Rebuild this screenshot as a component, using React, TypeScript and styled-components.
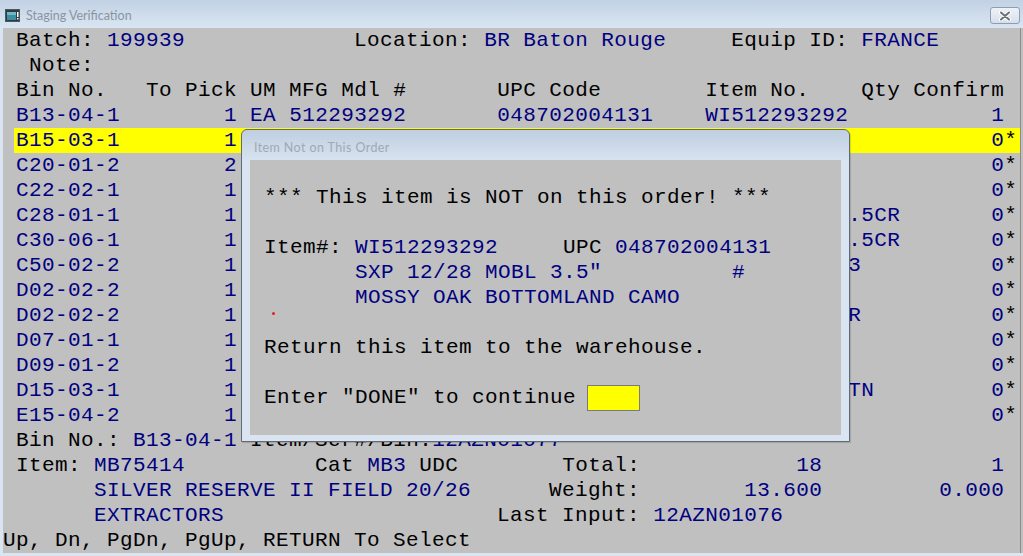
import React from "react";
import styled, { createGlobalStyle } from "styled-components";

const GlobalStyle = createGlobalStyle`
  html, body {
    margin: 0;
    padding: 0;
    background: #c0c0c0;
  }
  body {
    width: 1023px;
    height: 556px;
    overflow: hidden;
  }
`;

type Tone = "label" | "value" | "pad";
type Piece = [number, string, Tone?];

// lays pieces out on the 78-column terminal grid, padding gaps with spaces
function layout(pieces: Piece[]) {
  const out: { text: string; tone: Tone }[] = [];
  let cursor = 0;
  pieces.forEach(([col, text, tone = "value"]) => {
    if (col > cursor) out.push({ text: " ".repeat(col - cursor), tone: "pad" });
    out.push({ text, tone });
    cursor = col + text.length;
  });
  return out;
}

const Window = styled.div`
  width: 1023px;
  height: 556px;
  display: flex;
  flex-direction: column;
  background: #d9e5f1;
  overflow: hidden;
`;

const TitleBar = styled.div`
  height: 28px;
  flex: none;
  display: flex;
  align-items: flex-start;
  background: linear-gradient(to bottom, #c2d2e4 0%, #d9e5f2 100%);
`;

const AppIcon = styled.svg`
  width: 15px;
  height: 13px;
  margin: 9px 0 0 5px;
  flex: none;
`;

const Caption = styled.span<{ $faded?: boolean }>`
  font-family: Lato, "Noto Sans", sans-serif;
  font-size: 12.5px;
  color: ${({ $faded }) => ($faded ? "#a0a9b3" : "#8a949f")};
  line-height: 16px;
  margin: 8px 0 0 6px;
  white-space: nowrap;
`;

const CloseButton = styled.div`
  margin: 7px 3px 0 auto;
  width: 28px;
  height: 15px;
  border: 1px solid #8e9db0;
  border-radius: 3px;
  background: linear-gradient(to bottom, #eef2f7 0%, #d6e0eb 100%);
  display: flex;
  align-items: center;
  justify-content: center;
`;

const Body = styled.div`
  flex: 1;
  display: flex;
  padding: 0 0 3px 3px;
`;

const Screen = styled.div`
  position: relative;
  width: 1017px;
  height: 525px;
  background: #c0c0c0;
  font-family: "Liberation Mono", "Courier New", monospace;
  font-size: 21px;
  letter-spacing: 0.4px;
  color: #000000;
`;

const EdgeStrip = styled.div`
  width: 3px;
  background: #c0c0c0;
  border-left: 1px solid #8c8c8c;
  box-sizing: border-box;
`;

const Line = styled.div<{ $highlight?: boolean }>`
  display: flex;
  height: 25px;
  line-height: 25px;
  white-space: pre;
  background: ${({ $highlight }) =>
    $highlight ? "linear-gradient(90deg, transparent 11px, #ffff00 11px)" : "none"};
`;

const Txt = styled.span<{ $tone: Tone }>`
  color: ${({ $tone }) => ($tone === "value" ? "#000080" : "#000000")};
`;

const Dialog = styled.div`
  position: absolute;
  left: 238px;
  top: 101px;
  width: 609px;
  height: 313px;
  box-sizing: border-box;
  border: 1px solid #5f6a76;
  border-radius: 6px 6px 0 0;
  background: linear-gradient(to bottom, #bfcfe1 0px, #d6e2ef 30px, #dae5f1 30px);
  padding: 0 8px 6px 8px;
  display: flex;
  flex-direction: column;
  box-shadow: 1px 1px 1px rgba(0, 0, 0, 0.15);
`;

const DialogTitle = styled.div`
  height: 30px;
  box-sizing: border-box;
  flex: none;
  display: flex;
  align-items: flex-start;
  padding-top: 2px;
  margin-left: -2px;
`;

const DialogBody = styled.div`
  position: relative;
  flex: 1;
  background: #c0c0c0;
  padding-left: 14px;
`;

const InputBox = styled.span`
  display: block;
  flex: none;
  width: 51px;
  height: 24px;
  margin-left: 11px;
  background: #ffff00;
  border: 1px solid #7a7a7a;
`;

const RedDot = styled.span`
  position: absolute;
  left: 22px;
  top: 152px;
  width: 3px;
  height: 3px;
  border-radius: 50%;
  background: #e3201b;
`;

type Bin = {
  bin: string;
  pick: string;
  um: string;
  mfg: string;
  upc: string;
  item: string;
  qty: string;
  star: boolean;
  hl?: boolean;
};

const bins: Bin[] = [
  { bin: "B13-04-1", pick: "1", um: "EA", mfg: "512293292", upc: "048702004131", item: "WI512293292", qty: "1", star: false },
  { bin: "B15-03-1", pick: "1", um: "EA", mfg: "512280351", upc: "048702003516", item: "WI512280351", qty: "0", star: true, hl: true },
  { bin: "C20-01-2", pick: "2", um: "EA", mfg: "SB12283", upc: "048702017223", item: "WISB12283", qty: "0", star: true },
  { bin: "C22-02-1", pick: "1", um: "EA", mfg: "RM12283", upc: "048702018114", item: "WIRM12283", qty: "0", star: true },
  { bin: "C28-01-1", pick: "1", um: "EA", mfg: "SXP12283", upc: "048702016691", item: "SXP1228WTFL.5CR", qty: "0", star: true },
  { bin: "C30-06-1", pick: "1", um: "EA", mfg: "SXP12283", upc: "048702016707", item: "SXP1228MOBL.5CR", qty: "0", star: true },
  { bin: "C50-02-2", pick: "1", um: "EA", mfg: "WMX1228", upc: "048702012419", item: "WMAX122835M3", qty: "0", star: true },
  { bin: "D02-02-2", pick: "1", um: "EA", mfg: "SB2083", upc: "048702014505", item: "WISB2083", qty: "0", star: true },
  { bin: "D02-02-2", pick: "1", um: "EA", mfg: "SBE1228", upc: "048702014611", item: "SBE12283MOBR", qty: "0", star: true },
  { bin: "D07-01-1", pick: "1", um: "EA", mfg: "XP1228", upc: "048702010279", item: "WIXP1228", qty: "0", star: true },
  { bin: "D09-01-2", pick: "1", um: "EA", mfg: "XP2075", upc: "048702010347", item: "WIXP2075", qty: "0", star: true },
  { bin: "D15-03-1", pick: "1", um: "EA", mfg: "SXP1228", upc: "048702016813", item: "SXP12283BLKTN", qty: "0", star: true },
  { bin: "E15-04-2", pick: "1", um: "EA", mfg: "X12XP", upc: "048702004650", item: "WIX12XP", qty: "0", star: true },
];

const topLines: Piece[][] = [
  [[1, "Batch:", "label"], [8, "199939"], [27, "Location:", "label"], [37, "BR"], [40, "Baton Rouge"], [56, "Equip ID:", "label"], [66, "FRANCE"]],
  [[2, "Note:", "label"]],
  [
    [1, "Bin No.", "label"], [11, "To Pick", "label"], [19, "UM", "label"], [22, "MFG", "label"], [26, "Mdl", "label"],
    [30, "#", "label"], [38, "UPC Code", "label"], [54, "Item No.", "label"], [66, "Qty", "label"], [70, "Confirm", "label"],
  ],
];

const bottomLines: Piece[][] = [
  [[1, "Bin No.:", "label"], [10, "B13-04-1"], [19, "Item/Ser#/Bin:", "label"], [33, "12AZN01077"]],
  [[1, "Item:", "label"], [7, "MB75414"], [24, "Cat", "label"], [28, "MB3"], [32, "UDC", "label"], [43, "Total:", "label"], [61, "18"], [76, "1"]],
  [[7, "SILVER RESERVE II FIELD 20/26"], [42, "Weight:", "label"], [57, "13.600"], [72, "0.000"]],
  [[7, "EXTRACTORS"], [38, "Last Input:", "label"], [50, "12AZN01076"]],
  [[0, "Up, Dn, PgDn, PgUp, RETURN To Select", "label"]],
];

const dialogLines: Piece[][] = [
  [],
  [[0, "*** This item is NOT on this order! ***", "label"]],
  [],
  [[0, "Item#:", "label"], [7, "WI512293292"], [23, "UPC", "label"], [27, "048702004131"]],
  [[7, 'SXP 12/28 MOBL 3.5"'], [36, "#"]],
  [[7, "MOSSY OAK BOTTOMLAND CAMO"]],
  [],
  [[0, "Return this item to the warehouse.", "label"]],
  [],
  [[0, 'Enter "DONE" to continue', "label"]],
  [],
];

function binPieces(b: Bin): Piece[] {
  const pieces: Piece[] = [
    [1, b.bin],
    [18 - b.pick.length, b.pick],
    [19, b.um],
    [22, b.mfg],
    [38, b.upc],
    [54, b.item],
    [76, b.qty],
  ];
  if (b.star) pieces.push([77, "*", "label"]);
  return pieces;
}

function TermLine({ pieces, highlight, children }: { pieces: Piece[]; highlight?: boolean; children?: React.ReactNode }) {
  return (
    <Line $highlight={highlight}>
      {layout(pieces).map((p, i) => (
        <Txt key={i} $tone={p.tone}>
          {p.text}
        </Txt>
      ))}
      {children}
    </Line>
  );
}

export default function App() {
  return (
    <>
      <GlobalStyle />
      <Window>
        <TitleBar>
          <AppIcon viewBox="0 0 15 13">
            <rect x="0.5" y="0.5" width="14" height="12" fill="#2f3b44" stroke="#4a5660" />
            <rect x="2" y="3" width="9" height="8" fill="#3c8f9e" />
            <rect x="2" y="3" width="9" height="3" fill="#6fb7c4" />
            <rect x="12" y="3" width="1.5" height="5" fill="#ffffff" />
            <rect x="12" y="9" width="1.5" height="1.5" fill="#ffffff" />
          </AppIcon>
          <Caption>Staging Verification</Caption>
          <CloseButton>
            <svg width="12" height="10" viewBox="0 0 12 10">
              <path d="M2 1.5 L10 8.5 M10 1.5 L2 8.5" stroke="#ffffff" strokeWidth="4" strokeLinecap="round" />
              <path d="M2 1.5 L10 8.5 M10 1.5 L2 8.5" stroke="#6b7076" strokeWidth="2" strokeLinecap="round" />
            </svg>
          </CloseButton>
        </TitleBar>
        <Body>
          <Screen>
            {topLines.map((l, i) => (
              <TermLine key={`t${i}`} pieces={l} />
            ))}
            {bins.map((b, i) => (
              <TermLine key={`b${i}`} pieces={binPieces(b)} highlight={b.hl} />
            ))}
            {bottomLines.map((l, i) => (
              <TermLine key={`f${i}`} pieces={l} />
            ))}

            <Dialog>
              <DialogTitle>
                <Caption $faded>Item Not on This Order</Caption>
              </DialogTitle>
              <DialogBody>
                {dialogLines.map((l, i) => (
                  <TermLine key={`d${i}`} pieces={l}>
                    {i === 9 && <InputBox />}
                  </TermLine>
                ))}
                <RedDot />
              </DialogBody>
            </Dialog>
          </Screen>
          <EdgeStrip />
        </Body>
      </Window>
    </>
  );
}
